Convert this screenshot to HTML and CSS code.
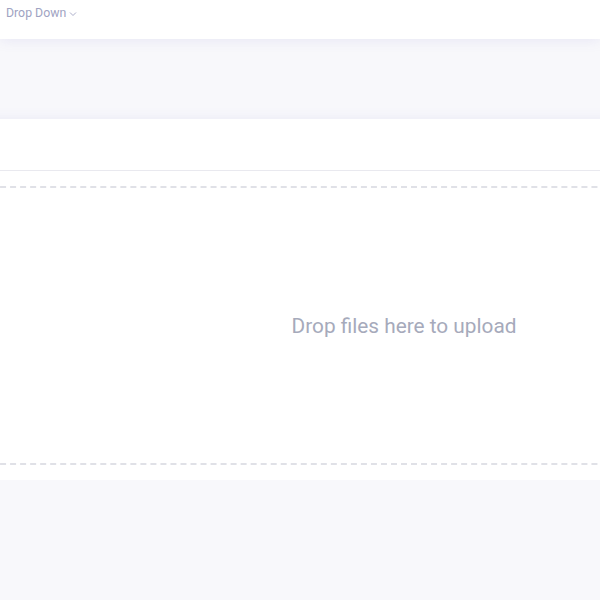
FILE: index.html
```html
<!DOCTYPE html>
<html>
<head>
<meta charset="utf-8">
<link rel="stylesheet" href="styles.css">
</head>
<body>
<header class="topbar">
  <a class="dropdown">Drop Down
    <svg class="chev" width="8" height="6" viewBox="0 0 8 6"><path d="M1 1.5 L4 4.5 L7 1.5" fill="none" stroke="currentColor" stroke-width="0.9"/></svg>
  </a>
</header>
<main class="content">
  <section class="card">
    <div class="card-header"></div>
    <div class="card-body">
      <div class="dropzone">
        <span class="dz-message">Drop files here to upload</span>
      </div>
    </div>
  </section>
</main>
</body>
</html>
```
FILE: styles.css
```css
html, body {
  margin: 0;
  padding: 0;
  background: #f8f8fb;
  font-family: Roboto, "Noto Sans", sans-serif;
  overflow: hidden;
}
.topbar {
  height: 39px;
  background: #fff;
  box-shadow: 0 2px 12px rgba(100, 90, 200, 0.1);
  display: flex;
  align-items: center;
  padding-left: 6px;
  position: relative;
  z-index: 2;
}
.dropdown {
  font-size: 12.3px;
  color: #a0a3c2;
  display: flex;
  align-items: center;
  gap: 3px;
  margin-top: -13px;
}
.chev {
  margin-top: 1px;
}
.content {
  padding-top: 80px;
  margin-left: -30px;
  width: 868px;
}
.card {
  background: #fff;
  box-shadow: 0 2px 14px rgba(100, 90, 200, 0.12);
}
.card-header {
  height: 51px;
  border-bottom: 1px solid #e9e9ef;
}
.card-body {
  padding: 15px 0 15px;
}
.dropzone {
  height: 275px;
  border: 2px dashed #e0e1e7;
  display: flex;
  align-items: center;
  justify-content: center;
}
.dz-message {
  font-size: 20.8px;
  color: #a6aabb;
}
```
